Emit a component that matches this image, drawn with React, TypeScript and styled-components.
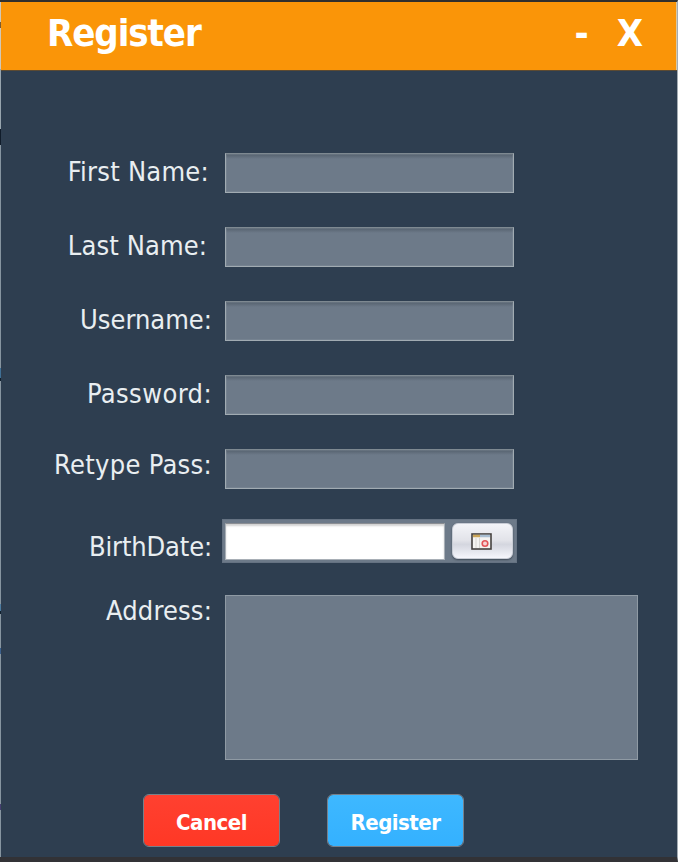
import React from "react";
import styled, { createGlobalStyle } from "styled-components";

const GlobalStyle = createGlobalStyle`
  * { box-sizing: border-box; }
  body { margin: 0; background: #2e3e50; font-family: "DejaVu Sans Condensed", "DejaVu Sans", sans-serif; font-stretch: condensed; }
`;

const Window = styled.main`
  width: 678px;
  height: 862px;
  display: flex;
  flex-direction: column;
  overflow: hidden;
  padding-left: 1px;
  background:
    linear-gradient(
      #d0c8b8 20px, #7a5a30 20px 26px, #d0c8b8 26px 67px, #98a5ae 67px 127px,
      #101c2a 127px 143px, #8795a0 143px 366px, #3f6f95 366px 376px, #10202e 376px 379px,
      #8795a0 379px 602px, #4c7ba0 602px 609px, #10202e 609px 612px, #8795a0 612px 646px,
      #3a5f8c 646px 652px, #8795a0 652px 802px, #453f70 802px 808px, #8795a0 808px
    ) 0 0 / 1px 100% no-repeat,
    #2e3e50;
  border: solid;
  border-width: 2px 1px 5px 0;
  border-color: #302f2d #a3acb3 #323236;
`;

const TitleBar = styled.header`
  height: 68px;
  flex: none;
  display: flex;
  align-items: flex-start;
  padding: 9px 33px 0 46px;
  background: #fa9508;
  border-right: 1px solid #d9c9a6;
  color: #fff;
  font-size: 38px;
  line-height: 44px;
  font-weight: bold;
`;

const Title = styled.h1`
  margin: 0 auto 0 0;
  font: inherit;
  letter-spacing: -1.1px;
`;

const WindowButton = styled.button<{ $gap?: number }>`
  margin: 0 ${(p) => p.$gap ?? 0}px 0 0;
  padding: 0;
  border: 0;
  background: none;
  color: inherit;
  font: inherit;
`;

const Form = styled.form`
  flex: 1;
  padding-top: 82px;
  border-top: 1px solid #5c4a32;
`;

const Row = styled.div<{ $height: number }>`
  display: flex;
  align-items: flex-start;
  height: ${(p) => p.$height}px;
`;

const Label = styled.label<{ $drop: number; $end: number; $track: number }>`
  width: 224px;
  flex: none;
  padding: ${(p) => p.$drop}px ${(p) => 224 - p.$end}px 0 0;
  text-align: right;
  white-space: nowrap;
  color: #e9eef1;
  font-size: 27px;
  line-height: 32px;
  letter-spacing: ${(p) => p.$track}px;
`;

const TextInput = styled.input`
  width: 289px;
  height: 40px;
  padding: 4px 8px;
  border: 1px solid #a1abb2;
  border-top-color: #7e8991;
  outline: 0;
  border-radius: 0;
  background: linear-gradient(#55616e, #6d7a89 5px);
  box-shadow: inset 0 0 0 1px rgba(145, 157, 167, 0.25);
  color: #fff;
  font: inherit;
`;

const DatePicker = styled.div`
  display: flex;
  align-items: flex-start;
  gap: 7px;
  width: 295px;
  height: 44px;
  margin-left: -3px;
  padding: 4px 3px;
  background: #6d7a89;
  box-shadow: inset 0 0 0 1px #657282;
`;

const DateInput = styled.input`
  width: 220px;
  height: 37px;
  border: 1px solid #a8afb6;
  border-top-color: #8b8e93;
  border-radius: 0;
  outline: 0;
  background: #fff;
  box-shadow: inset 0 2px 2px #d2d2d2;
`;

const CalendarButton = styled.button`
  width: 61px;
  height: 36px;
  display: flex;
  align-items: center;
  justify-content: center;
  padding: 0 2px 0 0;
  border: 1px solid #c8ccd5;
  border-radius: 6px;
  background: linear-gradient(#f3f4f8, #e2e3e9 48%, #d4d6df 60%, #f5f6fc);
  box-shadow: 0 1px 2px #3e4855;
`;

const AddressInput = styled.textarea`
  width: 413px;
  height: 165px;
  padding: 8px;
  border: 1px solid #8f9aa4;
  border-radius: 0;
  outline: 0;
  resize: none;
  background: #6d7a89;
  color: #fff;
  font: inherit;
`;

const Actions = styled.div`
  display: flex;
  gap: 47px;
  padding-left: 142px;
`;

const ActionButton = styled.button<{ $top: string; $bottom: string }>`
  width: 137px;
  height: 53px;
  padding: 3px 0 0;
  border: 1px solid #77808a;
  border-radius: 6px;
  background: linear-gradient(${(p) => p.$top}, ${(p) => p.$bottom}) padding-box;
  color: #fff;
  font-family: inherit;
  font-stretch: condensed;
  font-size: 22px;
  font-weight: bold;
  letter-spacing: -0.5px;
`;

const CalendarIcon = () => (
  <svg width="21" height="17" viewBox="0 0 21 17">
    <rect x="1" y="1" width="19" height="15" fill="#f5f4f2" stroke="#45413f" strokeWidth="1.6" />
    <path d="M2 3H9" stroke="#cba659" strokeWidth="2.5" />
    <path d="M9 3H19" stroke="#a9bfd3" strokeWidth="2.5" />
    <path d="M5 5V15M8.5 5V15" stroke="#d8d6d2" />
    <circle cx="14" cy="10.5" r="2.8" fill="#f8d3d3" stroke="#e35559" strokeWidth="1.6" />
  </svg>
);

const fields = [
  { id: "first", label: "First Name:", drop: 3, end: 208, track: 0.25, height: 74 },
  { id: "last", label: "Last Name:", drop: 3, end: 206, track: 0.1, height: 74 },
  { id: "user", label: "Username:", drop: 3, end: 211, track: 0, height: 74 },
  { id: "password", label: "Password:", drop: 3, end: 211, track: 0.4, height: 74 },
  { id: "retype", label: "Retype Pass:", drop: 0, end: 211, track: 0.3, height: 70 },
];

export default function App() {
  return (
    <>
      <GlobalStyle />
      <Window>
        <TitleBar>
          <Title>Register</Title>
          <WindowButton $gap={28} aria-label="Minimize">-</WindowButton>
          <WindowButton aria-label="Close">X</WindowButton>
        </TitleBar>
        <Form>
          {fields.map((f) => (
            <Row key={f.id} $height={f.height}>
              <Label htmlFor={f.id} $drop={f.drop} $end={f.end} $track={f.track}>{f.label}</Label>
              <TextInput id={f.id} type={f.id === "password" || f.id === "retype" ? "password" : "text"} />
            </Row>
          ))}
          <Row $height={76}>
            <Label htmlFor="birth" $drop={12} $end={211} $track={-0.15}>BirthDate:</Label>
            <DatePicker>
              <DateInput id="birth" />
              <CalendarButton type="button" aria-label="Open calendar"><CalendarIcon /></CalendarButton>
            </DatePicker>
          </Row>
          <Row $height={199}>
            <Label htmlFor="address" $drop={0} $end={211} $track={0.15}>Address:</Label>
            <AddressInput id="address" />
          </Row>
          <Actions>
            <ActionButton type="button" $top="#ff4030" $bottom="#ff3825">Cancel</ActionButton>
            <ActionButton type="button" $top="#3eb8ff" $bottom="#34b1ff">Register</ActionButton>
          </Actions>
        </Form>
      </Window>
    </>
  );
}
